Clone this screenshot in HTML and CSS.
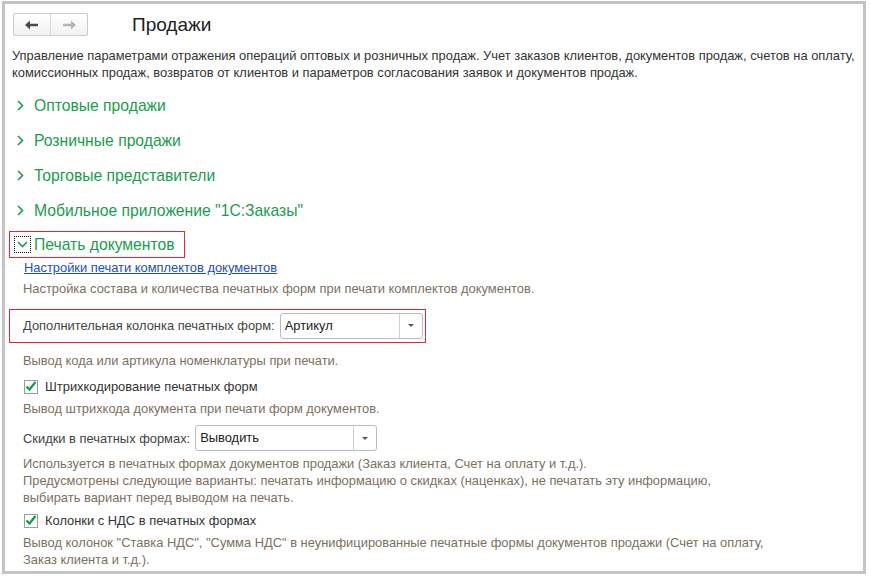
FILE: index.html
```html
<!DOCTYPE html>
<html>
<head>
    <title>Продажи</title>
    <link rel="stylesheet" href="styles.css">
</head>
<body>
    <div class="frame">
        <div class="header">
            <div class="nav">
                <span class="nav-btn">
                    <svg width="14" height="10" viewBox="0 0 14 10"><path d="M0 5 L5 0.5 L5 3.8 L13 3.8 L13 6.2 L5 6.2 L5 9.5 Z" fill="#4a4a4a"/></svg>
                </span>
                <span class="nav-btn">
                    <svg width="14" height="10" viewBox="0 0 14 10"><path d="M14 5 L9 0.5 L9 3.8 L1 3.8 L1 6.2 L9 6.2 L9 9.5 Z" fill="#b4b4b4"/></svg>
                </span>
            </div>
            <h1 class="title">Продажи</h1>
        </div>

        <p class="intro">Управление параметрами отражения операций оптовых и розничных продаж. Учет заказов клиентов, документов продаж, счетов на оплату,<br>комиссионных продаж, возвратов от клиентов и параметров согласования заявок и документов продаж.</p>

        <div class="sections">
            <div class="section">
                <svg class="chev" width="7" height="11" viewBox="0 0 7 11"><path d="M1 1 L5.5 5.5 L1 10" fill="none" stroke="#1a9c4c" stroke-width="1.6"/></svg>
                <span>Оптовые продажи</span>
            </div>
            <div class="section">
                <svg class="chev" width="7" height="11" viewBox="0 0 7 11"><path d="M1 1 L5.5 5.5 L1 10" fill="none" stroke="#1a9c4c" stroke-width="1.6"/></svg>
                <span>Розничные продажи</span>
            </div>
            <div class="section">
                <svg class="chev" width="7" height="11" viewBox="0 0 7 11"><path d="M1 1 L5.5 5.5 L1 10" fill="none" stroke="#1a9c4c" stroke-width="1.6"/></svg>
                <span>Торговые представители</span>
            </div>
            <div class="section">
                <svg class="chev" width="7" height="11" viewBox="0 0 7 11"><path d="M1 1 L5.5 5.5 L1 10" fill="none" stroke="#1a9c4c" stroke-width="1.6"/></svg>
                <span>Мобильное приложение "1С:Заказы"</span>
            </div>

            <div class="section-open">
                <div class="open-head">
                    <span class="toggle">
                        <svg width="11" height="7" viewBox="0 0 11 7"><path d="M1 1 L5.5 5.5 L10 1" fill="none" stroke="#1a9c4c" stroke-width="1.6"/></svg>
                    </span>
                    <span>Печать документов</span>
                </div>

                <div class="group">
                    <a class="link" href="#">Настройки печати комплектов документов</a>
                    <p class="hint hint-first">Настройка состава и количества печатных форм при печати комплектов документов.</p>

                    <div class="field-box">
                        <span class="label">Дополнительная колонка печатных форм:</span>
                        <div class="combo combo-article">
                            <span class="combo-text">Артикул</span>
                            <span class="combo-btn"><i class="tri"></i></span>
                        </div>
                    </div>
                    <p class="hint hint-a">Вывод кода или артикула номенклатуры при печати.</p>

                    <label class="check check-a">
                        <span class="box">
                            <svg width="12" height="11" viewBox="0 0 12 11"><path d="M1.5 5.5 L4.5 8.5 L10.5 1" fill="none" stroke="#1a9c4c" stroke-width="2.4"/></svg>
                        </span>
                        Штрихкодирование печатных форм
                    </label>
                    <p class="hint hint-b">Вывод штрихкода документа при печати форм документов.</p>

                    <div class="field field-discount">
                        <span class="label">Скидки в печатных формах:</span>
                        <div class="combo combo-discount">
                            <span class="combo-text">Выводить</span>
                            <span class="combo-btn"><i class="tri"></i></span>
                        </div>
                    </div>
                    <p class="hint hint-c">Используется в печатных формах документов продажи (Заказ клиента, Счет на оплату и т.д.).<br>Предусмотрены следующие варианты: печатать информацию о скидках (наценках), не печатать эту информацию,<br>выбирать вариант перед выводом на печать.</p>

                    <label class="check check-b">
                        <span class="box">
                            <svg width="12" height="11" viewBox="0 0 12 11"><path d="M1.5 5.5 L4.5 8.5 L10.5 1" fill="none" stroke="#1a9c4c" stroke-width="2.4"/></svg>
                        </span>
                        Колонки с НДС в печатных формах
                    </label>
                    <p class="hint hint-d">Вывод колонок "Ставка НДС", "Сумма НДС" в неунифицированные печатные формы документов продажи (Счет на оплату,<br>Заказ клиента и т.д.).</p>
                </div>
            </div>
        </div>
    </div>
</body>
</html>
```

FILE: styles.css
```css
body {
    margin: 0;
    background: white;
    font-family: "Liberation Sans", Arial, sans-serif;
    font-size: 12.9px;
    color: #333;
}
p { margin: 0; }

.frame {
    box-sizing: border-box;
    width: 864px;
    height: 573px;
    margin: 1px 0 0 2px;
    border: 3px solid #c4c4c4;
    overflow: hidden;
}

/* header */
.header {
    display: flex;
    align-items: center;
    padding: 9px 0 0 8px;
}
.nav {
    display: flex;
    height: 21px;
    border: 1px solid #c9c9c9;
    border-radius: 2px;
    background: linear-gradient(#ffffff, #f1f1f1);
}
.nav-btn {
    display: flex;
    align-items: center;
    justify-content: center;
    width: 36px;
}
.nav-btn + .nav-btn {
    border-left: 1px solid #dadada;
}
.title {
    margin: 0 0 0 44px;
    font-size: 19px;
    font-weight: normal;
    color: #222;
    line-height: 23px;
}

.intro {
    margin-top: 11px;
    padding-left: 7px;
    line-height: 17px;
    color: #333;
}

/* sections */
.sections {
    margin-top: 7px;
}
.section {
    display: flex;
    align-items: center;
    height: 35px;
    padding-left: 12px;
    font-size: 15.7px;
    color: #1a9c4c;
}
.chev {
    margin-right: 10px;
}

.section-open {
    margin-top: 3px;
}
.open-head {
    display: inline-flex;
    align-items: center;
    box-sizing: border-box;
    height: 27px;
    margin-left: 4px;
    padding: 0 9px 0 4px;
    border: 1px solid #e8262e;
    font-size: 15.7px;
    color: #1a9c4c;
}
.toggle {
    display: flex;
    align-items: center;
    justify-content: center;
    box-sizing: border-box;
    width: 17px;
    height: 17px;
    margin-right: 3px;
    border: 1px dotted #111;
}

/* expanded group */
.group {
    padding-left: 18px;
}
.link {
    display: inline-block;
    margin-top: 1px;
    padding-left: 1px;
    line-height: 17px;
    color: #1d4fb5;
    text-decoration: underline;
}
.hint {
    line-height: 17px;
    color: #7c705d;
}
.hint-first { margin-top: 4px; }
.hint-a { margin-top: 9px; }
.hint-b { margin-top: 5px; }
.hint-c { margin-top: 4px; }
.hint-d { margin-top: 5px; }

.label {
    color: #444;
    margin-right: 5px;
}
.field-box {
    display: flex;
    align-items: center;
    box-sizing: border-box;
    width: 417px;
    height: 34px;
    margin: 12px 0 0 -14px;
    padding: 0 0 1px 13px;
    border: 1px solid #e8262e;
}
.field {
    display: flex;
    align-items: center;
}
.field-discount {
    margin-top: 8px;
}

.combo {
    display: flex;
    box-sizing: border-box;
    height: 26px;
    border: 1px solid #bcbcbc;
    border-radius: 3px;
    background: white;
}
.combo-article { width: 143px; }
.combo-discount { width: 182px; }
.combo-text {
    flex: 1;
    padding-left: 4px;
    line-height: 24px;
    color: #222;
}
.combo-btn {
    display: flex;
    align-items: center;
    justify-content: center;
    width: 22px;
    border-left: 1px solid #d0d0d0;
}
.tri {
    width: 0;
    height: 0;
    border-left: 3px solid transparent;
    border-right: 3px solid transparent;
    border-top: 3px solid #555;
}

.check {
    display: flex;
    align-items: center;
    height: 17px;
    color: #333;
}
.check-a { margin-top: 9px; }
.check-b { margin-top: 6px; }
.box {
    display: flex;
    align-items: center;
    justify-content: center;
    box-sizing: border-box;
    width: 14px;
    height: 14px;
    margin: 0 7px 0 1px;
    border: 1px solid #9c9c9c;
    background: white;
}
```
